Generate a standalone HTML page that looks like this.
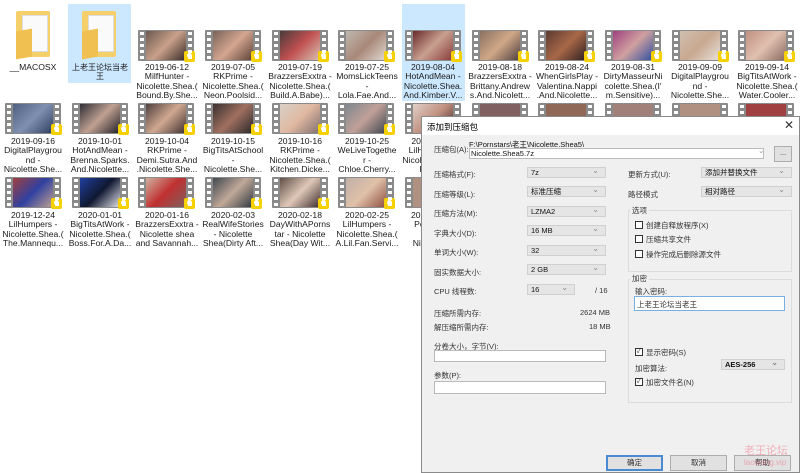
<!DOCTYPE html>
<html><head><meta charset="utf-8"><style>
*{margin:0;padding:0;box-sizing:border-box}
body{width:800px;height:473px;overflow:hidden;background:#fff;position:relative;font-family:"Liberation Sans","Noto Sans CJK SC",sans-serif}
.it{position:absolute;width:66px;text-align:center;font-size:8.6px;line-height:9.3px;color:#1a1a1a;white-space:nowrap;overflow:hidden}
.th{position:absolute;width:56px;height:31px;background:#8a8a8a;border-radius:1px}
.th i{position:absolute;left:8px;right:8px;top:1px;bottom:1px}
.th:before,.th:after{content:"";position:absolute;top:2px;bottom:2px;width:4px;left:2px;background:repeating-linear-gradient(#fff 0 3px,transparent 3px 6px)}
.th:after{left:auto;right:2px}
.th b{position:absolute;right:-1px;bottom:-1px;width:11px;height:11px;background:#f6d000;border-radius:2px}
.th b:after{content:"";position:absolute;left:3px;top:2px;width:5px;height:5px;border-radius:50%;background:#fff}
.sel{position:absolute;background:#cce8ff}
.dlg{position:absolute;left:421px;top:116px;width:379px;height:357px;background:#f0f0f0;border:1px solid #8a8a8a;z-index:5;font-size:7.5px;color:#333}
.dlg div{position:absolute}
.tb{left:0;top:0;width:100%;height:18px;background:#fff}
.cb{height:11px;background:#e5e5e5;border:1px solid #d0d0d0;font-size:7.5px;padding-left:3px;line-height:9px;color:#111}
.cb:after{content:"⌄";position:absolute;right:6px;top:-2px;color:#888;font-size:8px}
.inp{background:#fff;border:1px solid #bbb}
.chk{width:8px;height:8px;border:1px solid #333;background:#fff}
.grp{border:1px solid #dcdcdc}
.btn{height:16px;width:57px;background:#e1e1e1;border:1px solid #adadad;text-align:center;line-height:14px}
</style></head><body>
<div class="sel" style="left:68px;top:4px;width:63px;height:79px"></div>
<div class="sel" style="left:402px;top:4px;width:63px;height:97px"></div>
<!-- folders -->
<div style="position:absolute;left:16px;top:11px;width:34px;height:46px;background:#f5cf6a;border-radius:2px"></div>
<div style="position:absolute;left:22px;top:15px;width:26px;height:37px;background:#fafafa;border:1px solid #ddd"></div>
<div style="position:absolute;left:16px;top:30px;width:16px;height:28px;background:#f0c050;transform:skewY(-10deg)"></div>
<div style="position:absolute;left:82px;top:11px;width:34px;height:46px;background:#f5cf6a;border-radius:2px"></div>
<div style="position:absolute;left:88px;top:15px;width:26px;height:37px;background:#fafafa;border:1px solid #ddd"></div>
<div style="position:absolute;left:82px;top:30px;width:16px;height:28px;background:#f0c050;transform:skewY(-10deg)"></div>
<div class="it" style="left:0;top:63px">__MACOSX</div>
<div class="it" style="left:67px;top:63px;font-size:8px">上老王论坛当老<br>王</div>

<!-- row1 thumbs -->
<div class="th" style="left:138px;top:30px"><i style="background:linear-gradient(135deg,#6b5a50,#c9a08a,#3a2c28)"></i><b></b></div>
<div class="th" style="left:205px;top:30px"><i style="background:linear-gradient(135deg,#7a6258,#d3a690,#5c4036)"></i><b></b></div>
<div class="th" style="left:272px;top:30px"><i style="background:linear-gradient(135deg,#4a3a3a,#c05050,#d8c0b0)"></i><b></b></div>
<div class="th" style="left:338px;top:30px"><i style="background:linear-gradient(135deg,#c0b8b0,#a88878,#e0d8d0)"></i><b></b></div>
<div class="th" style="left:405px;top:30px"><i style="background:linear-gradient(135deg,#6a2a2a,#c8a090,#8a3a3a)"></i><b></b></div>
<div class="th" style="left:472px;top:30px"><i style="background:linear-gradient(135deg,#8a7060,#d0a888,#504040)"></i><b></b></div>
<div class="th" style="left:538px;top:30px"><i style="background:linear-gradient(135deg,#5a3a30,#a86848,#302020)"></i><b></b></div>
<div class="th" style="left:605px;top:30px"><i style="background:linear-gradient(135deg,#a04080,#d0a0a0,#3050a0)"></i><b></b></div>
<div class="th" style="left:672px;top:30px"><i style="background:linear-gradient(135deg,#d0c0b0,#c8a890,#e8e0d8)"></i><b></b></div>
<div class="th" style="left:738px;top:30px"><i style="background:linear-gradient(135deg,#c09080,#e0c0b0,#8a6a60)"></i><b></b></div>
<div class="it" style="left:134px;top:63px">2019-06-12<br>MilfHunter -<br>Nicolette.Shea.(<br>Bound.By.She...</div>
<div class="it" style="left:200px;top:63px">2019-07-05<br>RKPrime -<br>Nicolette.Shea.(<br>Neon.Poolsid...</div>
<div class="it" style="left:267px;top:63px">2019-07-19<br>BrazzersExxtra -<br>Nicolette.Shea.(<br>Build.A.Babe)...</div>
<div class="it" style="left:334px;top:63px">2019-07-25<br>MomsLickTeens<br>-<br>Lola.Fae.And...</div>
<div class="it" style="left:400px;top:63px">2019-08-04<br>HotAndMean -<br>Nicolette.Shea.<br>And.Kimber.V...</div>
<div class="it" style="left:467px;top:63px">2019-08-18<br>BrazzersExxtra -<br>Brittany.Andrew<br>s.And.Nicolett...</div>
<div class="it" style="left:534px;top:63px">2019-08-24<br>WhenGirlsPlay -<br>Valentina.Nappi<br>.And.Nicolette...</div>
<div class="it" style="left:600px;top:63px">2019-08-31<br>DirtyMasseurNi<br>colette.Shea.(I'<br>m.Sensitive)...</div>
<div class="it" style="left:667px;top:63px">2019-09-09<br>DigitalPlaygrou<br>nd -<br>Nicolette.She...</div>
<div class="it" style="left:734px;top:63px">2019-09-14<br>BigTitsAtWork -<br>Nicolette.Shea.(<br>Water.Cooler...</div>

<!-- row2 -->
<div class="th" style="left:5px;top:103px"><i style="background:linear-gradient(135deg,#506080,#8090b0,#304060)"></i><b></b></div>
<div class="th" style="left:72px;top:103px"><i style="background:linear-gradient(135deg,#303038,#c0a090,#202028)"></i><b></b></div>
<div class="th" style="left:138px;top:103px"><i style="background:linear-gradient(135deg,#504040,#d0a890,#403030)"></i><b></b></div>
<div class="th" style="left:205px;top:103px"><i style="background:linear-gradient(135deg,#3a3030,#a07060,#2a2a2a)"></i><b></b></div>
<div class="th" style="left:272px;top:103px"><i style="background:linear-gradient(135deg,#d8d0c8,#e0b8a0,#807070)"></i><b></b></div>
<div class="th" style="left:338px;top:103px"><i style="background:linear-gradient(135deg,#808890,#c0a098,#404850)"></i><b></b></div>
<div class="th" style="left:405px;top:103px"><i style="background:linear-gradient(135deg,#e0d0c8,#c09080,#402020)"></i><b></b></div>
<div class="th" style="left:472px;top:103px"><i style="background:#806060"></i></div>
<div class="th" style="left:538px;top:103px"><i style="background:#906858"></i></div>
<div class="th" style="left:605px;top:103px"><i style="background:#a08078"></i></div>
<div class="th" style="left:672px;top:103px"><i style="background:#b09080"></i></div>
<div class="th" style="left:738px;top:103px"><i style="background:#a04040"></i></div>
<div class="it" style="left:0;top:137px">2019-09-16<br>DigitalPlaygrou<br>nd -<br>Nicolette.She...</div>
<div class="it" style="left:67px;top:137px">2019-10-01<br>HotAndMean -<br>Brenna.Sparks.<br>And.Nicolette...</div>
<div class="it" style="left:134px;top:137px">2019-10-04<br>RKPrime -<br>Demi.Sutra.And<br>.Nicolette.She...</div>
<div class="it" style="left:200px;top:137px">2019-10-15<br>BigTitsAtSchool<br>-<br>Nicolette.She...</div>
<div class="it" style="left:267px;top:137px">2019-10-16<br>RKPrime -<br>Nicolette.Shea.(<br>Kitchen.Dicke...</div>
<div class="it" style="left:334px;top:137px">2019-10-25<br>WeLiveTogethe<br>r -<br>Chloe.Cherry...</div>
<div class="it" style="left:400px;top:137px">2019-11-01<br>LilHumpers -<br>Nicolette.Shea.(<br>Front...</div>

<!-- row3 -->
<div class="th" style="left:5px;top:177px"><i style="background:linear-gradient(135deg,#a04040,#3040a0,#c0a090)"></i><b></b></div>
<div class="th" style="left:72px;top:177px"><i style="background:linear-gradient(135deg,#2040a0,#101830,#e0e0e8)"></i><b></b></div>
<div class="th" style="left:138px;top:177px"><i style="background:linear-gradient(135deg,#d0b0a0,#c03030,#806060)"></i><b></b></div>
<div class="th" style="left:205px;top:177px"><i style="background:linear-gradient(135deg,#404850,#c0a898,#303840)"></i><b></b></div>
<div class="th" style="left:272px;top:177px"><i style="background:linear-gradient(135deg,#605048,#e0c8b8,#403030)"></i><b></b></div>
<div class="th" style="left:338px;top:177px"><i style="background:linear-gradient(135deg,#c0b0a8,#e0c0a8,#905040)"></i><b></b></div>
<div class="th" style="left:405px;top:177px"><i style="background:#b09080"></i></div>
<div class="it" style="left:0;top:211px">2019-12-24<br>LilHumpers -<br>Nicolette.Shea.(<br>The.Mannequ...</div>
<div class="it" style="left:67px;top:211px">2020-01-01<br>BigTitsAtWork -<br>Nicolette.Shea.(<br>Boss.For.A.Da...</div>
<div class="it" style="left:134px;top:211px">2020-01-16<br>BrazzersExxtra -<br>Nicolette shea<br>and Savannah...</div>
<div class="it" style="left:200px;top:211px">2020-02-03<br>RealWifeStories<br>- Nicolette<br>Shea(Dirty Aft...</div>
<div class="it" style="left:267px;top:211px">2020-02-18<br>DayWithAPorns<br>tar - Nicolette<br>Shea(Day Wit...</div>
<div class="it" style="left:334px;top:211px">2020-02-25<br>LilHumpers -<br>Nicolette.Shea.(<br>A.Lil.Fan.Servi...</div>
<div class="it" style="left:400px;top:211px">2020-03-01<br>Pornstar -<br><br>Nicolette...</div>

<div class="dlg">
 <div class="tb"></div>
 <div style="left:5px;top:4px;font-size:8.5px;color:#000">添加到压缩包</div>
 <div style="left:362px;top:1px;font-size:12px;color:#333">✕</div>
 <div style="left:12px;top:27px">压缩包(A):</div>
 <div style="left:47px;top:22px;color:#111">F:\Pornstars\老王\Nicolette.Shea5\</div>
 <div class="inp" style="left:47px;top:31px;width:295px;height:11px;padding-left:1px;line-height:9px;color:#111">Nicolette.Shea5.7z</div>
 <div style="left:336px;top:29px;color:#999">⌄</div>
 <div class="btn" style="left:352px;top:29px;width:18px;height:16px;line-height:12px">...</div>

 <div style="left:12px;top:52px">压缩格式(F):</div>
 <div class="cb" style="left:105px;top:50px;width:79px">7z</div>
 <div style="left:12px;top:72px">压缩等级(L):</div>
 <div class="cb" style="left:105px;top:69px;width:79px">标准压缩</div>
 <div style="left:12px;top:91px">压缩方法(M):</div>
 <div class="cb" style="left:105px;top:89px;width:79px">LZMA2</div>
 <div style="left:12px;top:111px">字典大小(D):</div>
 <div class="cb" style="left:105px;top:108px;width:79px">16 MB</div>
 <div style="left:12px;top:130px">单词大小(W):</div>
 <div class="cb" style="left:105px;top:128px;width:79px">32</div>
 <div style="left:12px;top:150px">固实数据大小:</div>
 <div class="cb" style="left:105px;top:147px;width:79px">2 GB</div>
 <div style="left:12px;top:169px">CPU 线程数:</div>
 <div class="cb" style="left:105px;top:167px;width:48px">16</div>
 <div style="left:173px;top:169px">/ 16</div>
 <div style="left:12px;top:191px">压缩所需内存:</div>
 <div style="left:158px;top:191px">2624 MB</div>
 <div style="left:12px;top:205px">解压缩所需内存:</div>
 <div style="left:167px;top:205px">18 MB</div>
 <div style="left:12px;top:224px">分卷大小，字节(V):</div>
 <div class="inp" style="left:12px;top:233px;width:172px;height:12px"></div>
 <div style="left:12px;top:253px">参数(P):</div>
 <div class="inp" style="left:12px;top:264px;width:172px;height:13px"></div>

 <div style="left:206px;top:52px">更新方式(U):</div>
 <div class="cb" style="left:279px;top:50px;width:91px">添加并替换文件</div>
 <div style="left:206px;top:72px">路径模式</div>
 <div class="cb" style="left:279px;top:69px;width:91px">相对路径</div>
 <div class="grp" style="left:206px;top:93px;width:164px;height:62px"></div>
 <div style="left:208px;top:88px;background:#f0f0f0;padding:0 2px">选项</div>
 <div class="chk" style="left:213px;top:104px"></div><div style="left:224px;top:103px">创建自释放程序(X)</div>
 <div class="chk" style="left:213px;top:118px"></div><div style="left:224px;top:117px">压缩共享文件</div>
 <div class="chk" style="left:213px;top:133px"></div><div style="left:224px;top:132px">操作完成后删除源文件</div>
 <div class="grp" style="left:206px;top:162px;width:164px;height:124px"></div>
 <div style="left:208px;top:156px;background:#f0f0f0;padding:0 2px">加密</div>
 <div style="left:213px;top:169px">输入密码:</div>
 <div class="inp" style="left:212px;top:179px;width:151px;height:15px;border-color:#7ab0e0;padding:2px 2px;color:#333">上老王论坛当老王</div>
 <div class="chk" style="left:213px;top:231px;font-size:7px;line-height:6px;text-align:center">✓</div><div style="left:224px;top:230px">显示密码(S)</div>
 <div style="left:213px;top:246px">加密算法:</div>
 <div class="cb" style="left:299px;top:242px;width:64px;font-weight:bold">AES-256</div>
 <div class="chk" style="left:213px;top:261px;font-size:7px;line-height:6px;text-align:center">✓</div><div style="left:224px;top:260px">加密文件名(N)</div>

 <div class="btn" style="left:184px;top:338px;border-color:#4a8ad0;border-width:1px;box-shadow:inset 0 0 0 1px #4a8ad0">确定</div>
 <div class="btn" style="left:248px;top:338px">取消</div>
 <div class="btn" style="left:312px;top:338px">帮助</div>
 <div style="left:322px;top:329px;color:rgba(240,110,130,.5);font-size:11px;line-height:11px">老王论坛<br><span style="font-size:8px">laowang.vip</span></div>
</div>
</body></html>
